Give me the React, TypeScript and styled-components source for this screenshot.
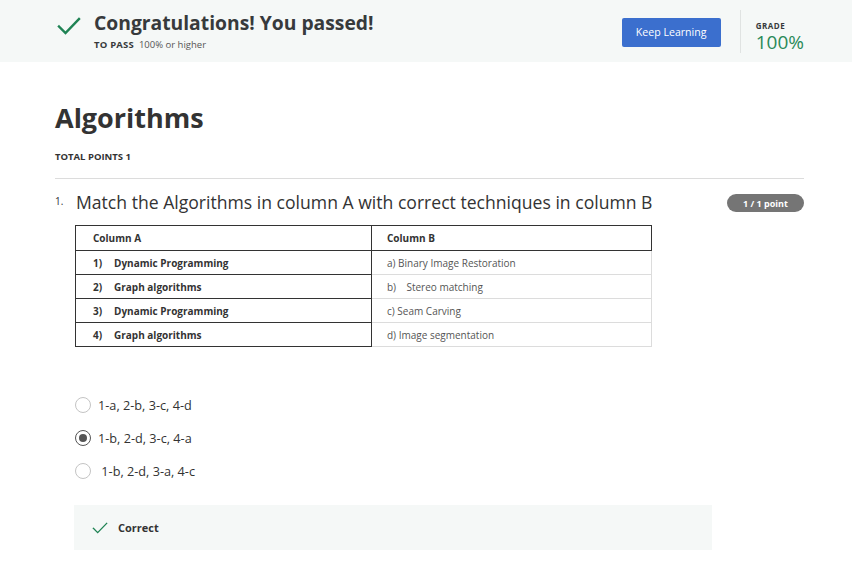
import React from "react";
import styled, { createGlobalStyle } from "styled-components";

const Global = createGlobalStyle`
  html, body { margin: 0; padding: 0; background: #fff; }
  body { font-family: "Open Sans", "Noto Sans", sans-serif; color: #333; }
  * { box-sizing: border-box; }
`;

const Page = styled.div`
  width: 852px;
  height: 561px;
  overflow: hidden;
  background: #fff;
`;

const Banner = styled.header`
  height: 62px;
  background: #f5f8f7;
  display: flex;
  align-items: center;
  padding: 0 48px 0 57px;
`;

const BannerMain = styled.div`
  flex: 1;
  display: flex;
  align-items: flex-start;
  gap: 13px;
  padding-top: 2px;
`;

const BannerTitle = styled.div`
  font-size: 19.3px;
  font-weight: 700;
  color: #373a3c;
  line-height: 24px;
  margin-top: -3px;
`;

const PassLine = styled.div`
  font-size: 9.5px;
  color: #555;
  margin-top: 4px;
  line-height: 12px;
`;

const SmallCaps = styled.span`
  font-weight: 700;
  color: #373a3c;
  letter-spacing: 0.2px;
  margin-right: 5px;
`;

const PrimaryButton = styled.button`
  width: 99px;
  height: 29px;
  background: #3b6fce;
  color: #fff;
  border: none;
  border-radius: 2px;
  font-family: inherit;
  font-size: 10.6px;
  padding: 0;
  margin-top: 2px;
`;

const Divider = styled.div`
  width: 1px;
  height: 43px;
  background: #e0e3e2;
  margin: 0 15px 0 19px;
`;

const Grade = styled.div`
  display: flex;
  flex-direction: column;
  padding-top: 10px;
`;

const GradeLabel = styled.div`
  font-size: 8px;
  font-weight: 700;
  letter-spacing: 0.5px;
  color: #373a3c;
  line-height: 10px;
`;

const GradeValue = styled.div`
  font-size: 19px;
  color: #2a8a58;
  line-height: 20px;
  margin-top: 1px;
`;

const Content = styled.main`
  padding: 36px 48px 0 55px;
`;

const Title = styled.h1`
  margin: 0;
  font-size: 27px;
  font-weight: 700;
  color: #333;
  line-height: 40px;
`;

const TotalPoints = styled.div`
  margin-top: 13px;
  font-size: 9.5px;
  font-weight: 700;
  color: #333;
  line-height: 12px;
`;

const Rule = styled.hr`
  border: none;
  border-top: 1px solid #dcdcdc;
  margin: 15px 0 0 0;
`;

const QuestionRow = styled.div`
  display: flex;
  align-items: flex-start;
  margin-top: 12px;
`;

const QNum = styled.span`
  font-size: 10px;
  width: 21px;
  padding-top: 3px;
  color: #333;
`;

const QBody = styled.div`
  flex: 1;
`;

const QText = styled.div`
  font-size: 17.6px;
  line-height: 23px;
  color: #333;
`;

const Badge = styled.span`
  background: #757575;
  color: #fff;
  font-size: 9px;
  font-weight: 700;
  border-radius: 9px;
  height: 18px;
  width: 77px;
  display: inline-flex;
  align-items: center;
  justify-content: center;
  margin-top: 3px;
`;

const Table = styled.table`
  border-collapse: collapse;
  table-layout: fixed;
  margin: 11px 0 0 -1px;
  width: 576px;
  font-size: 10px;
  color: #333;
`;

const HeadRow = styled.tr`
  height: 25px;
`;

const Cell = styled.td<{ $strong?: boolean; $dark?: boolean }>`
  height: 24px;
  padding: 0 0 0 15px;
  width: 280px;
  font-weight: ${(p) => (p.$strong ? 700 : 400)};
  color: ${(p) => (p.$strong ? "#333" : "#555")};
  border: 1px solid ${(p) => (p.$dark ? "#333" : "#dcdcdc")};
  white-space: pre;
`;

const LeftCell = styled(Cell)`
  width: 296px;
  padding-left: 17px;
  border: 1px solid #333;
`;

const Options = styled.div`
  margin-top: 50px;
  display: flex;
  flex-direction: column;
  gap: 17px;
`;

const Option = styled.label`
  display: flex;
  align-items: center;
  gap: 7px;
  font-size: 12.7px;
  color: #333;
  height: 16px;
  margin-left: -1px;
  white-space: pre;
`;

const Radio = styled.span<{ $checked?: boolean }>`
  width: 16px;
  height: 16px;
  border-radius: 50%;
  border: 1.5px solid ${(p) => (p.$checked ? "#555" : "#c4c4c4")};
  display: inline-flex;
  align-items: center;
  justify-content: center;
  &::after {
    content: "";
    width: 8px;
    height: 8px;
    border-radius: 50%;
    background: ${(p) => (p.$checked ? "#555" : "transparent")};
  }
`;

const Feedback = styled.div`
  margin-top: 26px;
  width: 638px;
  height: 45px;
  margin-left: -2px;
  background: #f5f8f7;
  display: flex;
  align-items: center;
  gap: 10px;
  padding-left: 18px;
  font-size: 11px;
  font-weight: 700;
  color: #333;
`;

const Check = ({ size, w }: { size: number; w: number }) => (
  <svg width={size} height={size} viewBox="0 0 24 24" fill="none">
    <path d="M2 12.5 L8.5 19 L22 5" stroke="#1f8354" strokeWidth={w} strokeLinecap="square" />
  </svg>
);

const rows: [string, string, string][] = [
  ["1)", "Dynamic Programming", "a) Binary Image Restoration"],
  ["2)", "Graph algorithms", "b)    Stereo matching"],
  ["3)", "Dynamic Programming", "c) Seam Carving"],
  ["4)", "Graph algorithms", "d) Image segmentation"],
];

const options = [
  { text: "1-a, 2-b, 3-c, 4-d", checked: false },
  { text: "1-b, 2-d, 3-c, 4-a", checked: true },
  { text: " 1-b, 2-d, 3-a, 4-c", checked: false },
];

const Num = styled.span`
  display: inline-block;
  width: 21px;
`;

export default function App() {
  return (
    <Page>
      <Global />
      <Banner>
        <BannerMain>
          <Check size={24} w={2.4} />
          <div>
            <BannerTitle>Congratulations! You passed!</BannerTitle>
            <PassLine>
              <SmallCaps>TO PASS</SmallCaps>100% or higher
            </PassLine>
          </div>
        </BannerMain>
        <PrimaryButton>Keep Learning</PrimaryButton>
        <Divider />
        <Grade>
          <GradeLabel>GRADE</GradeLabel>
          <GradeValue>100%</GradeValue>
        </Grade>
      </Banner>
      <Content>
        <Title>Algorithms</Title>
        <TotalPoints>TOTAL POINTS 1</TotalPoints>
        <Rule />
        <QuestionRow>
          <QNum>1.</QNum>
          <QBody>
            <QText>Match the Algorithms in column A with correct techniques in column B</QText>
            <Table>
              <tbody>
                <HeadRow>
                  <LeftCell $strong>Column A</LeftCell>
                  <Cell $strong $dark>Column B</Cell>
                </HeadRow>
                {rows.map(([n, a, b]) => (
                  <tr key={n}>
                    <LeftCell $strong>
                      <Num>{n}</Num>
                      {a}
                    </LeftCell>
                    <Cell>{b}</Cell>
                  </tr>
                ))}
              </tbody>
            </Table>
            <Options>
              {options.map((o) => (
                <Option key={o.text}>
                  <Radio $checked={o.checked} />
                  {o.text}
                </Option>
              ))}
            </Options>
            <Feedback>
              <Check size={16} w={2} />
              Correct
            </Feedback>
          </QBody>
          <Badge>1 / 1 point</Badge>
        </QuestionRow>
      </Content>
    </Page>
  );
}
